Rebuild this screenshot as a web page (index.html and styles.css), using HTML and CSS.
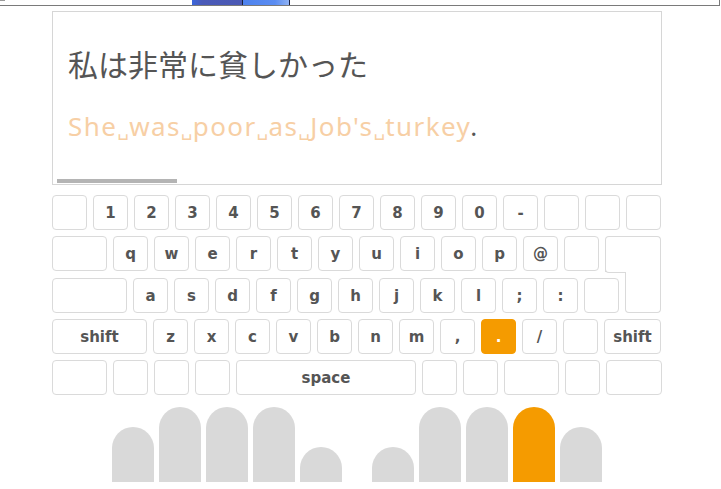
FILE: index.html
```html
<!DOCTYPE html>
<html lang="ja">
<head>
<meta charset="utf-8">
<title>Typing</title>
<link rel="stylesheet" href="styles.css">
</head>
<body>
<div class="topbar">
  <div class="tick"></div>
  <div class="progress">
    <div class="seg seg-a"></div>
    <div class="seg seg-b"></div>
  </div>
</div>

<div class="app">
  <div class="textbox">
    <div class="jp">私は非常に貧しかった</div>
    <div class="en"><span class="todo">She<span class="sp">␣</span>was<span class="sp">␣</span>poor<span class="sp">␣</span>as<span class="sp">␣</span>Job's<span class="sp">␣</span>turkey</span><span class="next">.</span></div>
    <div class="scroll-thumb"></div>
  </div>

  <div class="keyboard">
    <div class="row">
      <div class="key"></div>
      <div class="key">1</div>
      <div class="key">2</div>
      <div class="key">3</div>
      <div class="key">4</div>
      <div class="key">5</div>
      <div class="key">6</div>
      <div class="key">7</div>
      <div class="key">8</div>
      <div class="key">9</div>
      <div class="key">0</div>
      <div class="key">-</div>
      <div class="key"></div>
      <div class="key"></div>
      <div class="key"></div>
    </div>
    <div class="row">
      <div class="key w55"></div>
      <div class="key">q</div>
      <div class="key">w</div>
      <div class="key">e</div>
      <div class="key">r</div>
      <div class="key">t</div>
      <div class="key">y</div>
      <div class="key">u</div>
      <div class="key">i</div>
      <div class="key">o</div>
      <div class="key">p</div>
      <div class="key">@</div>
      <div class="key"></div>
      <div class="key enter-top"></div>
    </div>
    <div class="row">
      <div class="key w75"></div>
      <div class="key">a</div>
      <div class="key">s</div>
      <div class="key">d</div>
      <div class="key">f</div>
      <div class="key">g</div>
      <div class="key">h</div>
      <div class="key">j</div>
      <div class="key">k</div>
      <div class="key">l</div>
      <div class="key">;</div>
      <div class="key">:</div>
      <div class="key"></div>
      <div class="key enter-bottom"></div>
    </div>
    <div class="row">
      <div class="key w95">shift</div>
      <div class="key">z</div>
      <div class="key">x</div>
      <div class="key">c</div>
      <div class="key">v</div>
      <div class="key">b</div>
      <div class="key">n</div>
      <div class="key">m</div>
      <div class="key">,</div>
      <div class="key active">.</div>
      <div class="key">/</div>
      <div class="key"></div>
      <div class="key w57">shift</div>
    </div>
    <div class="row">
      <div class="key w55"></div>
      <div class="key"></div>
      <div class="key"></div>
      <div class="key"></div>
      <div class="key w180">space</div>
      <div class="key"></div>
      <div class="key"></div>
      <div class="key w55"></div>
      <div class="key"></div>
      <div class="key w56"></div>
    </div>
  </div>

  <div class="hands">
    <div class="hand">
      <div class="finger pinky"></div>
      <div class="finger"></div>
      <div class="finger"></div>
      <div class="finger"></div>
      <div class="finger thumb"></div>
    </div>
    <div class="hand">
      <div class="finger thumb"></div>
      <div class="finger"></div>
      <div class="finger"></div>
      <div class="finger on"></div>
      <div class="finger pinky"></div>
    </div>
  </div>
</div>
</body>
</html>
```

FILE: styles.css
```css
html, body {
  margin: 0;
  padding: 0;
  background: #ffffff;
}

body {
  font-family: "DejaVu Sans", Verdana, sans-serif;
  color: #555555;
}

.topbar {
  position: relative;
  width: 719px;
  height: 5px;
  border-right: 1px solid #7a7a7a;
  border-bottom: 1px solid #7a7a7a;
}

.tick {
  position: absolute;
  left: 0;
  top: 0;
  width: 5px;
  height: 1px;
  background: #9a9a9a;
}

.progress {
  position: absolute;
  left: 192px;
  top: 0;
  height: 5px;
  display: flex;
}

.seg {
  height: 5px;
}

.seg-a {
  width: 50px;
  background: linear-gradient(90deg, #3a66dc 0%, #4a5ab8 20%, #4b59b4 100%);
  border-right: 1px solid #1b2140;
}

.seg-b {
  width: 46px;
  background: linear-gradient(90deg, #4d82ee 0%, #5b8df2 70%, #8fb2f4 100%);
  border-right: 1px solid #1b2140;
}

.app {
  margin-left: 52px;
  width: 610px;
}

.textbox {
  position: relative;
  box-sizing: border-box;
  margin-top: 5px;
  height: 174px;
  border: 1px solid #d6d6d6;
  padding: 31px 0 0 15px;
}

.jp {
  font-family: "Noto Sans CJK JP", sans-serif;
  font-size: 30px;
  line-height: 40px;
  color: #555555;
  letter-spacing: 0;
}

.en {
  margin-top: 26px;
  font-family: "Noto Sans", "DejaVu Sans", sans-serif;
  font-size: 26px;
  line-height: 34px;
  letter-spacing: 1.4px;
  white-space: nowrap;
}

.todo {
  color: #f7cfa5;
}

.sp {
  font-family: "DejaVu Sans", sans-serif;
  font-size: 18px;
  letter-spacing: 0.5px;
}

.next {
  color: #555555;
}

.scroll-thumb {
  position: absolute;
  left: 4px;
  bottom: 1px;
  width: 120px;
  height: 4px;
  background: #b4b4b4;
}

.keyboard {
  margin-top: 10px;
  display: flex;
  flex-direction: column;
  gap: 6px;
}

.row {
  display: flex;
  gap: 6px;
  align-items: flex-start;
}

.key {
  box-sizing: border-box;
  width: 35px;
  height: 35px;
  border: 1px solid #dadada;
  border-radius: 4px;
  background: #ffffff;
  display: flex;
  align-items: center;
  justify-content: center;
  font-weight: bold;
  font-size: 15px;
  color: #555555;
  flex: none;
}

.w55 { width: 55px; }
.w56 { width: 56px; }
.w57 { width: 57px; }
.w75 { width: 75px; }
.w95 { width: 95px; }
.w180 { width: 180px; }

.key.active {
  background: #f59b00;
  border-color: #f59b00;
  color: #ffffff;
}

.enter-top {
  position: relative;
  width: 56px;
  height: 36px;
  border-bottom: none;
  border-radius: 4px 4px 0 0;
}

.enter-top::after {
  content: "";
  position: absolute;
  left: -1px;
  bottom: -1px;
  width: 20px;
  height: 5px;
  border-left: 1px solid #dadada;
  border-bottom: 1px solid #dadada;
  border-radius: 0 0 0 4px;
}

.enter-bottom {
  width: 36px;
  height: 41px;
  margin-top: -6px;
  border-top: none;
  border-radius: 0 0 4px 4px;
  background: transparent;
}

.hands {
  margin-top: 12px;
  height: 75px;
  display: flex;
  justify-content: center;
  gap: 30px;
}

.hand {
  display: flex;
  align-items: flex-end;
  gap: 5px;
}

.finger {
  width: 42px;
  height: 75px;
  background: #d9d9d9;
  border-radius: 21px 21px 0 0;
}

.finger.pinky {
  height: 55px;
}

.finger.thumb {
  height: 35px;
}

.finger.on {
  background: #f59b00;
}
```
